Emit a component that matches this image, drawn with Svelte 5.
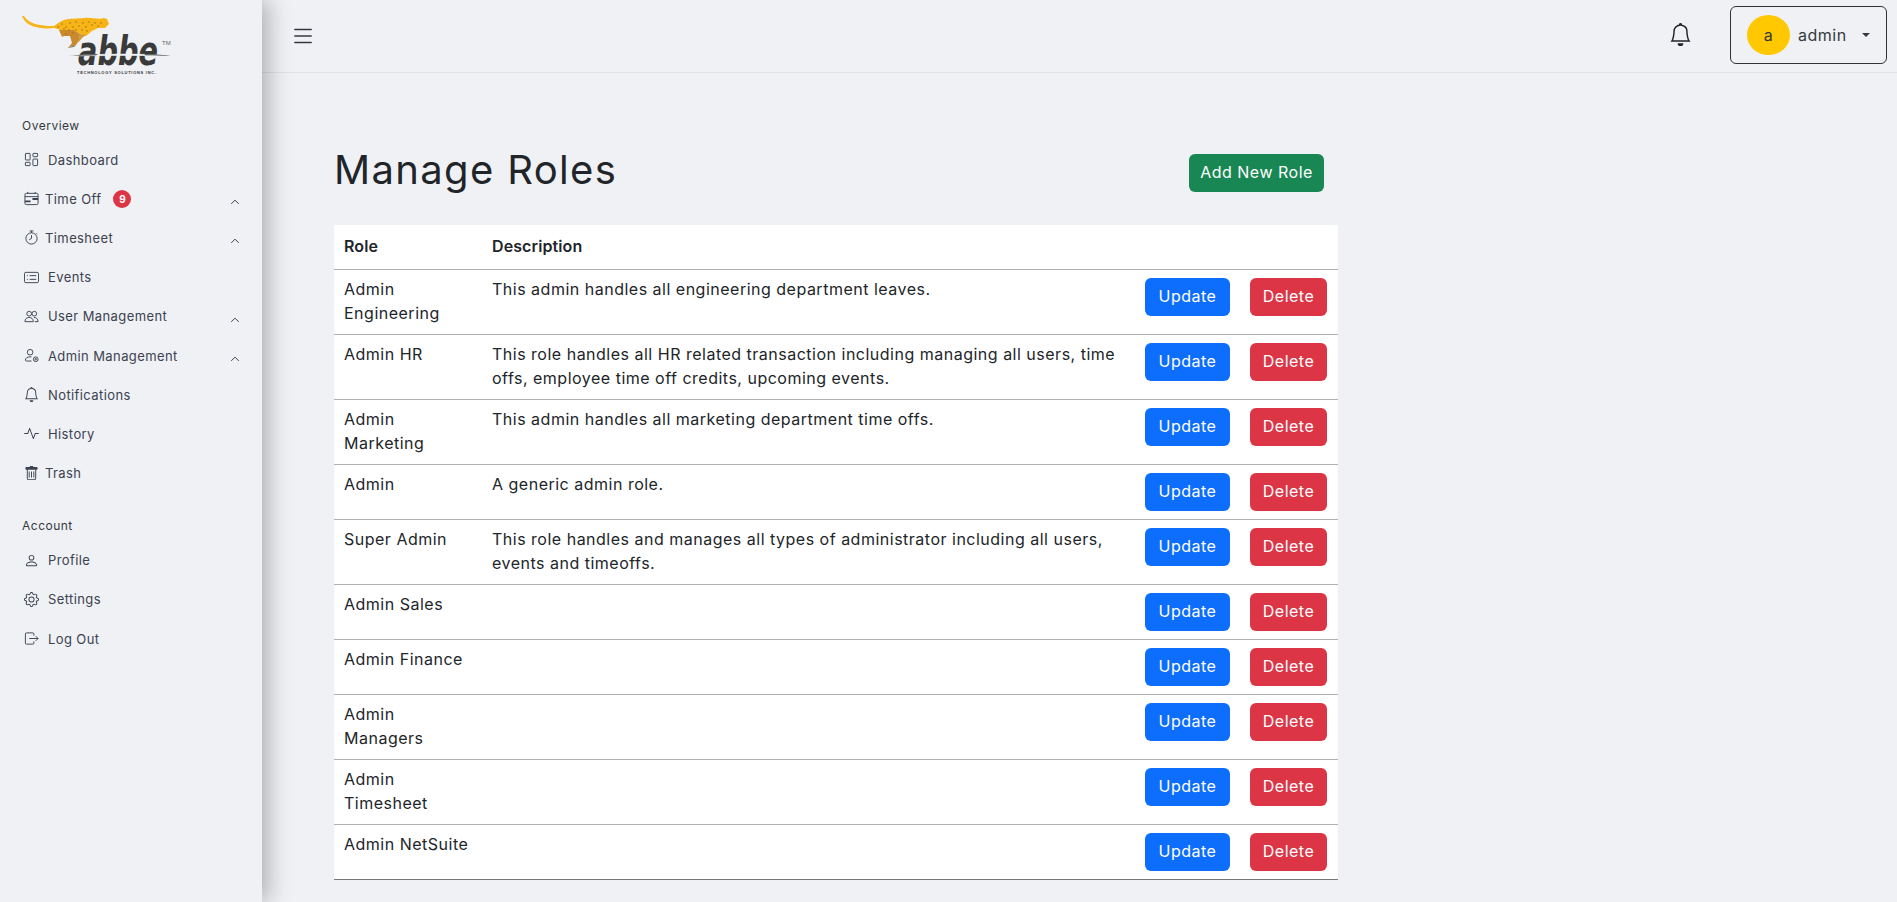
<script lang="ts">
const roles = [
  { name: 'Admin Engineering', description: 'This admin handles all engineering department leaves.' },
  { name: 'Admin HR', description: 'This role handles all HR related transaction including managing all users, time offs, employee time off credits, upcoming events.' },
  { name: 'Admin Marketing', description: 'This admin handles all marketing department time offs.' },
  { name: 'Admin', description: 'A generic admin role.' },
  { name: 'Super Admin', description: 'This role handles and manages all types of administrator including all users, events and timeoffs.' },
  { name: 'Admin Sales', description: '' },
  { name: 'Admin Finance', description: '' },
  { name: 'Admin Managers', description: '' },
  { name: 'Admin Timesheet', description: '' },
  { name: 'Admin NetSuite', description: '' },
]

const overview = [
  { label: 'Dashboard', icon: 'grid' },
  { label: 'Time Off', icon: 'calendar', tight: true, badge: 9, sub: true },
  { label: 'Timesheet', icon: 'stopwatch', tight: true, sub: true },
  { label: 'Events', icon: 'card' },
  { label: 'User Management', icon: 'people', sub: true },
  { label: 'Admin Management', icon: 'persongear', sub: true },
  { label: 'Notifications', icon: 'bell' },
  { label: 'History', icon: 'activity' },
  { label: 'Trash', icon: 'trash', tight: true },
]

const account = [
  { label: 'Profile', icon: 'person' },
  { label: 'Settings', icon: 'gear' },
  { label: 'Log Out', icon: 'logout' },
]

const spots = [
  [62, 24], [66, 27], [70, 23], [73, 27], [76, 22], [79, 26], [83, 23], [86, 27], [89, 22], [92, 25],
  [95, 23], [98, 26], [82, 30], [76, 30], [69, 30], [64, 29], [58, 27], [101, 23], [87, 31], [73, 33], [66, 34],
]

const bell = 'M8 16a2 2 0 0 0 2-2H6a2 2 0 0 0 2 2zM8 1.918l-.797.161A4.002 4.002 0 0 0 4 6c0 .628-.134 2.197-.459 3.742-.16.767-.376 1.566-.663 2.258h10.244c-.287-.692-.502-1.49-.663-2.258C12.134 8.197 12 6.628 12 6a4.002 4.002 0 0 0-3.203-3.92L8 1.917zM14.22 12c.223.447.481.801.78 1H1c.299-.199.557-.553.78-1C2.68 10.2 3 6.88 3 6c0-2.42 1.72-4.44 4.005-4.901a1 1 0 1 1 1.99 0A5.002 5.002 0 0 1 13 6c0 .88.32 4.2 1.22 6z'
const person = 'M8 8a3 3 0 1 0 0-6 3 3 0 0 0 0 6Zm2-3a2 2 0 1 1-4 0 2 2 0 0 1 4 0Zm4 8c0 1-1 1-1 1H3s-1 0-1-1 1-4 6-4 6 3 6 4Zm-1-.004c-.001-.246-.154-.986-.832-1.664C11.516 10.68 10.289 10 8 10c-2.29 0-3.516.68-4.168 1.332-.678.678-.83 1.418-.832 1.664h10Z'
const activity = 'M6 2a.5.5 0 0 1 .47.33L10 12.036l1.53-4.208A.5.5 0 0 1 12 7.5h3.5a.5.5 0 0 1 0 1h-3.15l-1.88 5.17a.5.5 0 0 1-.94 0L6 3.964 4.47 8.171A.5.5 0 0 1 4 8.5H.5a.5.5 0 0 1 0-1h3.15l1.88-5.17A.5.5 0 0 1 6 2Z'
const gear = 'M8 4.754a3.246 3.246 0 1 0 0 6.492 3.246 3.246 0 0 0 0-6.492zM5.754 8a2.246 2.246 0 1 1 4.492 0 2.246 2.246 0 0 1-4.492 0zM9.796 1.343c-.527-1.79-3.065-1.79-3.592 0l-.094.319a.873.873 0 0 1-1.255.52l-.292-.16c-1.64-.892-3.433.902-2.54 2.541l.159.292a.873.873 0 0 1-.52 1.255l-.319.094c-1.79.527-1.79 3.065 0 3.592l.319.094a.873.873 0 0 1 .52 1.255l-.16.292c-.892 1.64.901 3.434 2.541 2.54l.292-.159a.873.873 0 0 1 1.255.52l.094.319c.527 1.79 3.065 1.79 3.592 0l.094-.319a.873.873 0 0 1 1.255-.52l.292.16c1.64.893 3.434-.902 2.54-2.541l-.159-.292a.873.873 0 0 1 .52-1.255l.319-.094c1.79-.527 1.79-3.065 0-3.592l-.319-.094a.873.873 0 0 1-.52-1.255l.16-.292c.893-1.64-.902-3.433-2.541-2.54l-.292.159a.873.873 0 0 1-1.255-.52l-.094-.319zm-2.633.283c.246-.835 1.428-.835 1.674 0l.094.319a1.873 1.873 0 0 0 2.693 1.115l.291-.16c.764-.415 1.6.42 1.184 1.185l-.159.292a1.873 1.873 0 0 0 1.116 2.692l.318.094c.835.246.835 1.428 0 1.674l-.319.094a1.873 1.873 0 0 0-1.115 2.693l.16.291c.415.764-.42 1.6-1.185 1.184l-.291-.159a1.873 1.873 0 0 0-2.693 1.116l-.094.318c-.246.835-1.428.835-1.674 0l-.094-.319a1.873 1.873 0 0 0-2.692-1.115l-.292.16c-.764.415-1.6-.42-1.184-1.185l.159-.291A1.873 1.873 0 0 0 1.945 8.93l-.319-.094c-.835-.246-.835-1.428 0-1.674l.319-.094A1.873 1.873 0 0 0 3.06 4.377l-.16-.292c-.415-.764.42-1.6 1.185-1.184l.292.159a1.873 1.873 0 0 0 2.692-1.115l.094-.319z'
const trash = 'M5.5 5.5A.5.5 0 0 1 6 6v6a.5.5 0 0 1-1 0V6a.5.5 0 0 1 .5-.5zm2.5 0a.5.5 0 0 1 .5.5v6a.5.5 0 0 1-1 0V6a.5.5 0 0 1 .5-.5zm3 .5a.5.5 0 0 0-1 0v6a.5.5 0 0 0 1 0V6zM14.5 3a1 1 0 0 1-1 1H13v9a2 2 0 0 1-2 2H5a2 2 0 0 1-2-2V4h-.5a1 1 0 0 1-1-1V2a1 1 0 0 1 1-1H6a1 1 0 0 1 1-1h2a1 1 0 0 1 1 1h3.5a1 1 0 0 1 1 1v1zM4.118 4 4 4.059V13a1 1 0 0 0 1 1h6a1 1 0 0 0 1-1V4.059L11.882 4H4.118zM2.5 3V2h11v1h-11z'
</script>

{#snippet icon(name)}
  <svg class="nav-icon" viewBox="0 0 16 16" width="15" height="15" fill="none" stroke="currentColor" stroke-width="1">
    {#if name === 'grid'}
      <rect x="1.5" y="1.5" width="5" height="7" rx="0.5" />
      <rect x="1.5" y="11" width="5" height="3.5" rx="0.5" />
      <rect x="9.5" y="1.5" width="5" height="3.5" rx="0.5" />
      <rect x="9.5" y="7.5" width="5" height="7" rx="0.5" />
    {:else if name === 'calendar'}
      <rect x="1" y="2.5" width="14" height="12" rx="1.5" />
      <path d="M4 1v2M12 1v2M1 6h14" />
      <path d="M9 8.5h6M1 11h6" stroke-width="2" />
    {:else if name === 'stopwatch'}
      <circle cx="8" cy="9" r="6" />
      <path d="M6 1h4M8 1v2M8 5.5V9l-2.5 1.5M13 3.5l1 1" />
    {:else if name === 'card'}
      <rect x="0.5" y="2.5" width="15" height="11" rx="1.5" />
      <path d="M6 6h7M6 10h7M3 6h1M3 10h1" />
    {:else if name === 'people'}
      <circle cx="5.5" cy="5" r="2.5" />
      <circle cx="11" cy="5" r="2.5" />
      <path d="M1 13.5c0-3 2-4.5 4.5-4.5S10 10.500 10 13.500zM10.500 9c2.500 0 4.500 1.500 4.500 4.500h-3.500" />
    {:else if name === 'persongear'}
      <circle cx="6.500" cy="4.500" r="3" />
      <path d="M8 9.500c-.5-.1-1-.1-1.500-.1-3 0-5 1.500-5 3.500 0 .6.400 1 1 1H8" />
      <circle cx="12.500" cy="12" r="2.500" />
      <circle cx="12.500" cy="12" r="0.800" />
    {:else if name === 'bell'}
      <path d={bell} fill="currentColor" stroke="none" />
    {:else if name === 'activity'}
      <path d={activity} fill="currentColor" stroke="none" />
    {:else if name === 'trash'}
      <path d={trash} fill="currentColor" stroke="none" />
    {:else if name === 'person'}
      <path d={person} fill="currentColor" stroke="none" />
    {:else if name === 'gear'}
      <path d={gear} fill="currentColor" stroke="none" />
    {:else if name === 'logout'}
      <path d="M10.500 5V3a1 1 0 0 0-1-1h-7a1 1 0 0 0-1 1v10a1 1 0 0 0 1 1h7a1 1 0 0 0 1-1v-2M5.500 8h9.500M12.500 5.500 15 8l-2.500 2.500" />
    {/if}
  </svg>
{/snippet}

{#snippet navItem(item)}
  <a href="#top" class="nav-item" class:tight={item.tight}>
    {@render icon(item.icon)}
    <span class="nav-label">{item.label}</span>
    {#if item.badge}<span class="badge">{item.badge}</span>{/if}
    {#if item.sub}
      <svg class="chevron" viewBox="0 0 16 16" width="10" height="10" fill="none" stroke="currentColor" stroke-width="1.6"><path d="M2 11l6-6 6 6" /></svg>
    {/if}
  </a>
{/snippet}

<div class="layout">
  <aside class="sidebar">
    <div class="logo">
      <svg viewBox="0 0 190 80" width="190" height="80">
        <!-- running cheetah -->
        <path d="M22 16l2 0c3 5 9 8 16 9 5 1 10 1 14 1 4-3 8-6 14-7l16-1c8-1 14 2 20 0l3 1 2 5-4 4-7 0-6 3-6 5-6-2-6-4-12 1-4-2-4-1c-8 1-18 0-24-3-4-2-7-6-8-9z" fill="#f6b417" />
        <path d="M59 30l15 0 6 4-1 6-3 5-8 3 4-5-2-7-6 0-2 1z" fill="#c98a2e" />
        <path d="M80 34l6 1-4 3-4 5z" fill="#d59a35" />
        <path d="M67 48l9-3-2 2z" fill="#777" />
        {#each spots as [cx, cy]}
          <circle {cx} {cy} r="0.8" fill="#a8701c" />
        {/each}
        <text x="78" y="65" class="logo-word" textLength="80" lengthAdjust="spacingAndGlyphs">abbe</text>
        <path d="M68 56c30-2 72-3 104 0-34-1-70-.5-104 0z" fill="#eff1f5" stroke="#eff1f5" stroke-width="0.6" />
        <path d="M68 56c12-1 20-1.600 30-2l-2 1.200c-8 .2-18 .3-28 .8zM172 56c-8-1-16-1.600-28-2l2 1.200c8 .2 18 .3 26 .8z" fill="#444" />
        <text x="162" y="45" class="logo-tm">TM</text>
        <text x="77" y="73.500" class="logo-sub" textLength="79">TECHNOLOGY SOLUTIONS INC.</text>
      </svg>
    </div>
    <div class="section-label">Overview</div>
    {#each overview as item}
      {@render navItem(item)}
    {/each}
    <div class="section-label account">Account</div>
    {#each account as item}
      {@render navItem(item)}
    {/each}
  </aside>

  <div class="main">
    <header class="topbar">
      <button class="menu-toggle" aria-label="Toggle menu">
        <svg viewBox="0 0 16 16" width="26" height="26" fill="#343a40"><path fill-rule="evenodd" d="M2.500 12a.5.5 0 0 1 .5-.5h10a.5.5 0 0 1 0 1H3a.5.5 0 0 1-.5-.5zm0-4a.5.5 0 0 1 .5-.5h10a.5.5 0 0 1 0 1H3a.5.5 0 0 1-.5-.5zm0-4a.5.5 0 0 1 .5-.5h10a.5.5 0 0 1 0 1H3a.5.5 0 0 1-.5-.5z" /></svg>
      </button>
      <svg class="top-bell" viewBox="0 0 16 16" width="23" height="23" fill="#212529"><path d={bell} /></svg>
      <button class="user-menu">
        <span class="avatar">a</span>
        <span class="user-name">admin</span>
        <span class="caret"></span>
      </button>
    </header>

    <div class="content">
      <div class="title-row">
        <h1>Manage Roles</h1>
        <button class="btn btn-success">Add New Role</button>
      </div>
      <table>
        <colgroup>
          <col class="col-role" />
          <col class="col-desc" />
          <col class="col-update" />
          <col class="col-delete" />
        </colgroup>
        <thead>
          <tr>
            <th>Role</th>
            <th>Description</th>
            <th></th>
            <th></th>
          </tr>
        </thead>
        <tbody>
          {#each roles as role}
            <tr>
              <td>{role.name}</td>
              <td>{role.description}</td>
              <td class="action"><button class="btn btn-primary">Update</button></td>
              <td class="action"><button class="btn btn-danger">Delete</button></td>
            </tr>
          {/each}
        </tbody>
      </table>
    </div>
  </div>
</div>

<style>
  :global(body) {
    margin: 0;
    background: #eff1f5;
    color: #212529;
    font-family: Inter, "Noto Sans", sans-serif;
    font-size: 16px;
    letter-spacing: 0.5px;
    overflow: hidden;
  }

  .layout {
    display: flex;
    min-height: 902px;
  }

  .sidebar {
    width: 262px;
    flex-shrink: 0;
    height: 902px;
    background: #eff1f5;
    box-shadow: 6px 0 22px rgba(0, 0, 0, 0.28);
    position: relative;
    z-index: 1;
  }

  .logo {
    height: 115px;
    letter-spacing: 0;
  }

  .logo svg {
    display: block;
  }

  .logo-word {
    font-family: "DejaVu Sans", sans-serif;
    font-size: 40px;
    font-weight: 700;
    font-style: italic;
    fill: #3a3a3a;
  }

  .logo-tm {
    font-family: "Liberation Sans", sans-serif;
    font-size: 6px;
    fill: #666;
  }

  .logo-sub {
    font-family: "Liberation Sans", sans-serif;
    font-size: 4px;
    font-weight: 700;
    fill: #333;
  }

  .section-label {
    padding-left: 22px;
    font-size: 12px;
    line-height: 22px;
    margin-bottom: 3px;
    color: #343a40;
  }

  .section-label.account {
    margin-top: 22px;
    margin-bottom: 4px;
  }

  .nav-item {
    display: flex;
    align-items: center;
    height: 39.2px;
    padding-left: 24px;
    font-size: 13px;
    letter-spacing: 0.4px;
    color: #3c4250;
    text-decoration: none;
    position: relative;
  }

  .nav-icon {
    flex-shrink: 0;
    margin-right: 9px;
  }

  .nav-item.tight .nav-icon {
    margin-right: 6px;
  }

  .badge {
    margin-left: 12px;
    width: 18px;
    height: 18px;
    border-radius: 50%;
    background: #dc3545;
    color: #fff;
    font-size: 10px;
    font-weight: 700;
    letter-spacing: 0;
    display: flex;
    align-items: center;
    justify-content: center;
  }

  .chevron {
    position: absolute;
    left: 230px;
    top: 18px;
  }

  .main {
    flex: 1;
    min-width: 0;
  }

  .topbar {
    height: 72px;
    border-bottom: 1px solid #dee2e6;
    display: flex;
    align-items: center;
    padding: 0 10px 0 28px;
  }

  .menu-toggle {
    background: none;
    border: none;
    padding: 0;
    display: flex;
    margin-right: auto;
  }

  .top-bell {
    margin-right: 38px;
    margin-top: -4px;
  }

  .user-menu {
    width: 157px;
    height: 58px;
    margin-top: -2px;
    border: 1px solid #333;
    border-radius: 6px;
    background: none;
    display: flex;
    align-items: center;
    padding: 0 0 0 16px;
    font-family: inherit;
    letter-spacing: inherit;
    color: #343a40;
  }

  .avatar {
    width: 43px;
    height: 40px;
    border-radius: 50%;
    background: #ffc800;
    display: flex;
    align-items: center;
    justify-content: center;
    font-size: 16px;
  }

  .user-name {
    margin-left: 8px;
    font-size: 16px;
  }

  .caret {
    margin-left: 15px;
    border-top: 4px solid #343a40;
    border-left: 4px solid transparent;
    border-right: 4px solid transparent;
  }

  .content {
    padding: 0 0 0 72px;
  }

  .title-row {
    width: 990px;
    display: flex;
    align-items: center;
    justify-content: space-between;
    height: 152px;
    padding-top: 48px;
    box-sizing: border-box;
  }

  h1 {
    margin: 0 0 7px;
    font-size: 40px;
    font-weight: 400;
    line-height: 48px;
    letter-spacing: 1.35px;
    color: #212529;
  }

  table {
    width: 1004px;
    table-layout: fixed;
    border-collapse: collapse;
    background: #fff;
  }

  .col-role { width: 148px; }
  .col-update { width: 105px; }
  .col-delete { width: 96px; }

  th {
    text-align: left;
    font-weight: 600;
    letter-spacing: 0.1px;
    padding: 9px 10px 11px;
    line-height: 24px;
    border-bottom: 1px solid #b0b0b0;
  }

  td {
    padding: 7px 10px 9px;
    line-height: 24px;
    vertical-align: top;
    border-bottom: 1px solid #b0b0b0;
  }

  td.action {
    padding: 8px;
    white-space: nowrap;
  }

  tbody tr:last-child td {
    border-bottom-color: #777;
  }

  .btn {
    height: 38px;
    padding: 0 0 2px;
    border: none;
    border-radius: 6px;
    color: #fff;
    font-family: inherit;
    font-size: 16px;
    letter-spacing: inherit;
    vertical-align: top;
  }

  .btn-primary { background: #0d6efd; width: 85px; }
  .btn-danger { background: #dc3545; width: 77px; }
  .btn-success { background: #198754; width: 135px; }
</style>
